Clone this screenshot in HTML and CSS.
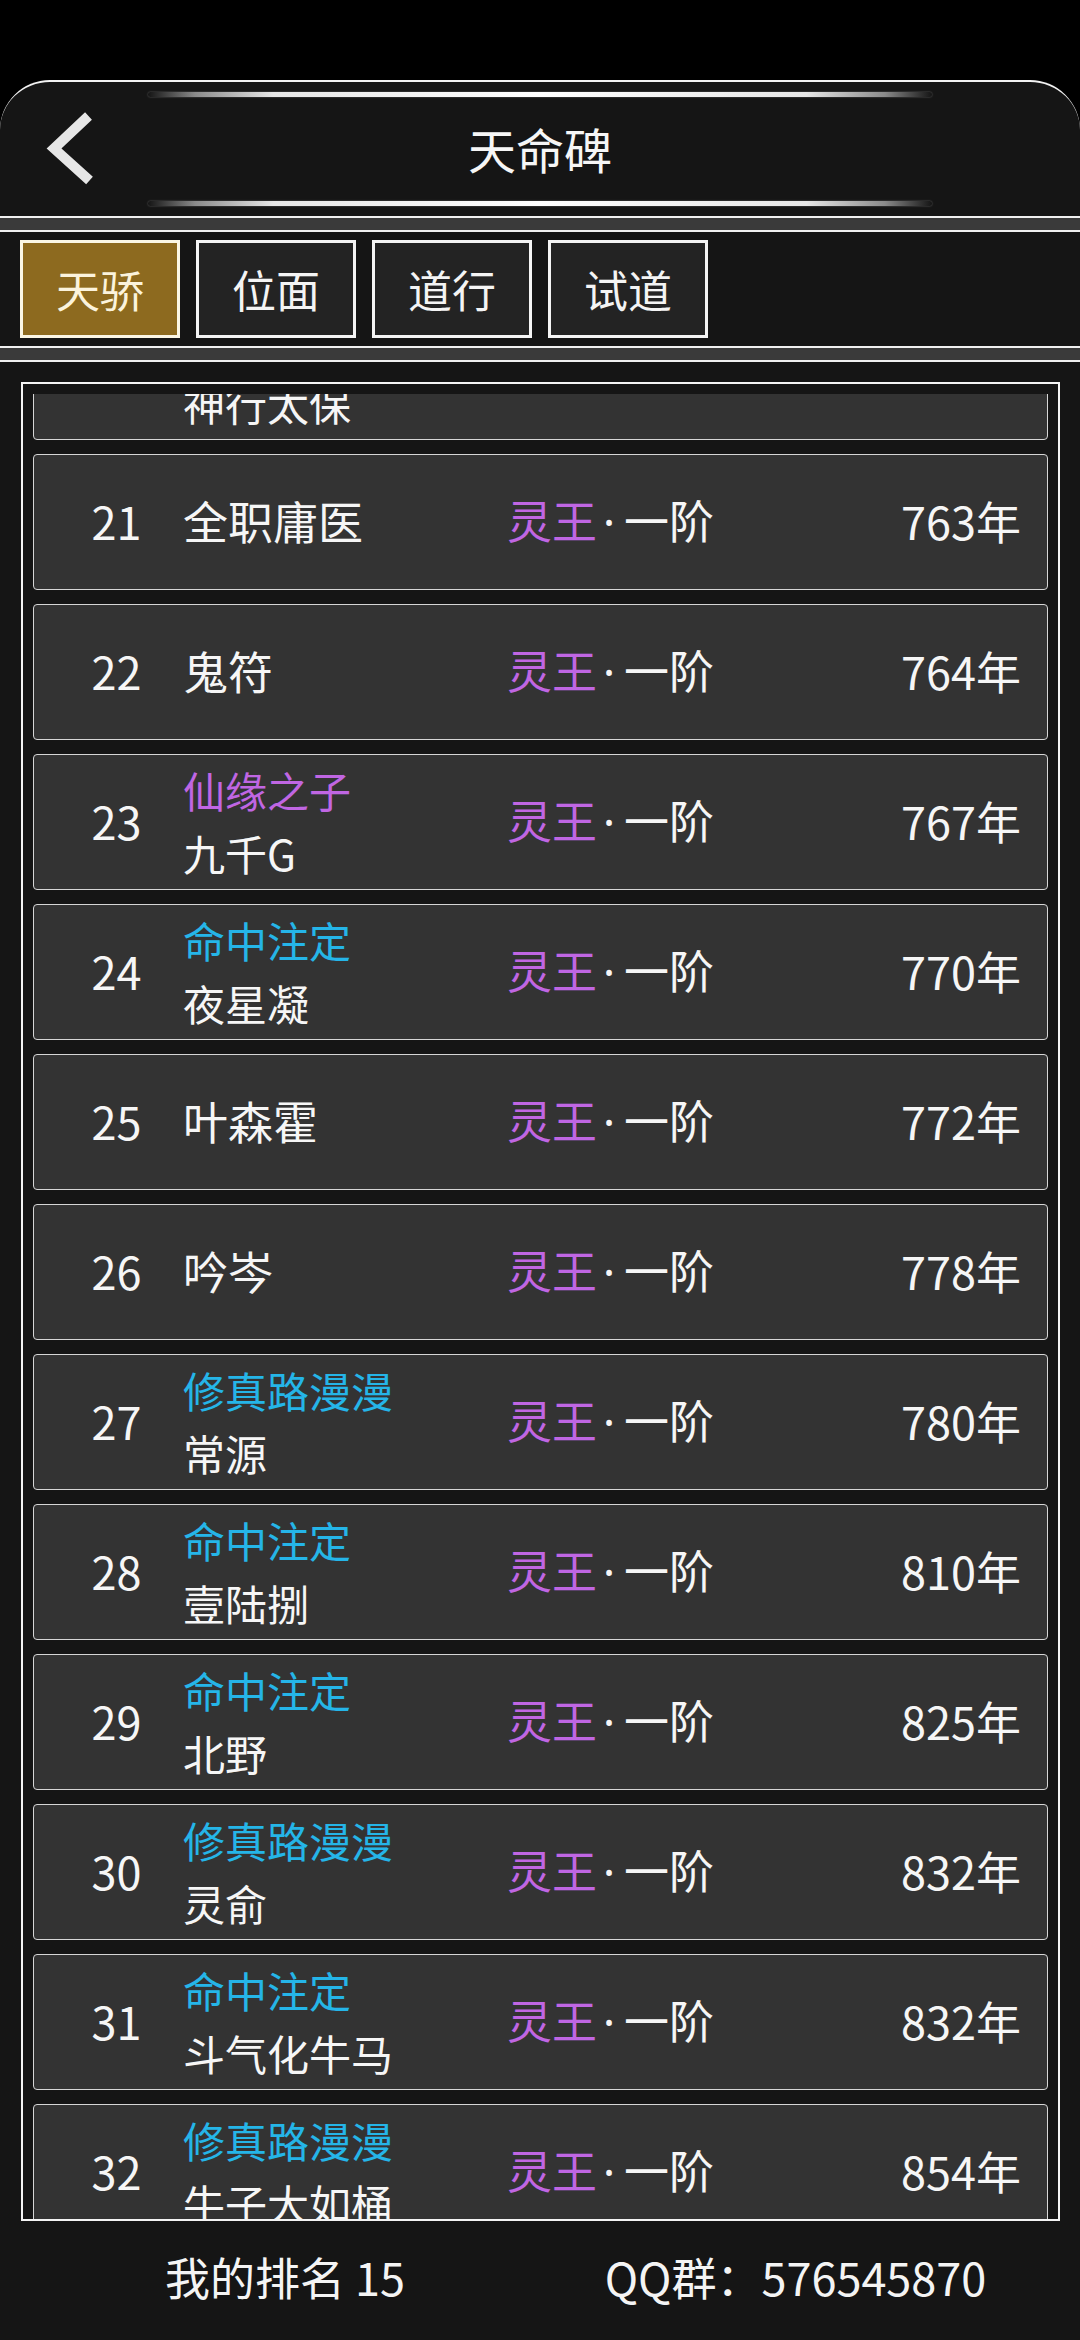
FILE: index.html
```html
<!DOCTYPE html>
<html lang="zh-CN">
<head>
<meta charset="utf-8">
<title>天命碑</title>
<link rel="stylesheet" href="styles.css">
</head>
<body>
<div class="page">
  <header class="header">
    <div class="glow-line"></div>
    <div class="title-row">
      <div class="back">
        <svg class="back-icon" width="60" height="80" viewBox="0 0 60 80">
          <polyline points="48.5,7 14,39.5 49.5,71.5" fill="none" stroke="#e6e6e6" stroke-width="10" stroke-linejoin="miter" stroke-miterlimit="4"/>
        </svg>
      </div>
      <h1 class="title">天命碑</h1>
      <div class="spacer"></div>
    </div>
    <div class="glow-line"></div>
  </header>
  <div class="sep"></div>
  <nav class="tabs">
    <div class="tab active">天骄</div>
    <div class="tab">位面</div>
    <div class="tab">道行</div>
    <div class="tab">试道</div>
  </nav>
  <div class="sep"></div>
  <main class="content">
    <section class="frame">
      <div class="viewport">
        <ul class="list">
          <li class="row"><span class="rank">20</span><span class="name two"><span class="badge cyan">命中注定</span><span>神行太保</span></span><span class="realm"><span class="purple">灵王</span><span class="dot">·</span>一阶</span><span class="years">762年</span></li>
          <li class="row"><span class="rank">21</span><span class="name"><span>全职庸医</span></span><span class="realm"><span class="purple">灵王</span><span class="dot">·</span>一阶</span><span class="years">763年</span></li>
          <li class="row"><span class="rank">22</span><span class="name"><span>鬼符</span></span><span class="realm"><span class="purple">灵王</span><span class="dot">·</span>一阶</span><span class="years">764年</span></li>
          <li class="row"><span class="rank">23</span><span class="name two"><span class="badge purple">仙缘之子</span><span>九千G</span></span><span class="realm"><span class="purple">灵王</span><span class="dot">·</span>一阶</span><span class="years">767年</span></li>
          <li class="row"><span class="rank">24</span><span class="name two"><span class="badge cyan">命中注定</span><span>夜星凝</span></span><span class="realm"><span class="purple">灵王</span><span class="dot">·</span>一阶</span><span class="years">770年</span></li>
          <li class="row"><span class="rank">25</span><span class="name"><span>叶森霍</span></span><span class="realm"><span class="purple">灵王</span><span class="dot">·</span>一阶</span><span class="years">772年</span></li>
          <li class="row"><span class="rank">26</span><span class="name"><span>吟岑</span></span><span class="realm"><span class="purple">灵王</span><span class="dot">·</span>一阶</span><span class="years">778年</span></li>
          <li class="row"><span class="rank">27</span><span class="name two"><span class="badge cyan">修真路漫漫</span><span>常源</span></span><span class="realm"><span class="purple">灵王</span><span class="dot">·</span>一阶</span><span class="years">780年</span></li>
          <li class="row"><span class="rank">28</span><span class="name two"><span class="badge cyan">命中注定</span><span>壹陆捌</span></span><span class="realm"><span class="purple">灵王</span><span class="dot">·</span>一阶</span><span class="years">810年</span></li>
          <li class="row"><span class="rank">29</span><span class="name two"><span class="badge cyan">命中注定</span><span>北野</span></span><span class="realm"><span class="purple">灵王</span><span class="dot">·</span>一阶</span><span class="years">825年</span></li>
          <li class="row"><span class="rank">30</span><span class="name two"><span class="badge cyan">修真路漫漫</span><span>灵俞</span></span><span class="realm"><span class="purple">灵王</span><span class="dot">·</span>一阶</span><span class="years">832年</span></li>
          <li class="row"><span class="rank">31</span><span class="name two"><span class="badge cyan">命中注定</span><span>斗气化牛马</span></span><span class="realm"><span class="purple">灵王</span><span class="dot">·</span>一阶</span><span class="years">832年</span></li>
          <li class="row"><span class="rank">32</span><span class="name two"><span class="badge cyan">修真路漫漫</span><span>牛子大如桶</span></span><span class="realm"><span class="purple">灵王</span><span class="dot">·</span>一阶</span><span class="years">854年</span></li>
        </ul>
      </div>
    </section>
    <footer class="footer">
      <div class="my-rank">我的排名 15</div>
      <div class="qq">QQ群：576545870</div>
    </footer>
  </main>
</div>
</body>
</html>
```

FILE: styles.css
```css
* {
  box-sizing: border-box;
  margin: 0;
  padding: 0;
}

html, body {
  width: 1080px;
  height: 2340px;
  background: #000;
  overflow: hidden;
}

body {
  font-family: "Noto Sans CJK SC", "Noto Sans", sans-serif;
  color: #f4f4f4;
}

.page {
  width: 1080px;
  height: 2340px;
  padding-top: 80px;
  display: flex;
  flex-direction: column;
}

.header {
  height: 138px;
  background: #151515;
  border-top: 2px solid #f2f2f2;
  border-bottom: 2px solid #f0f0f0;
  border-radius: 50px 50px 0 0;
  padding: 10px 0;
  display: flex;
  flex-direction: column;
}

.glow-line {
  height: 5px;
  margin: 0 148px;
  background: linear-gradient(90deg, rgba(120,120,120,0) 0%, #8a8a8a 6%, #e6e6e6 16%, #ffffff 50%, #e6e6e6 84%, #8a8a8a 94%, rgba(120,120,120,0) 100%);
  border-radius: 3px;
  box-shadow: 0 0 2px rgba(255,255,255,0.35);
}

.title-row {
  height: 104px;
  display: grid;
  grid-template-columns: 1fr auto 1fr;
  align-items: center;
}

.back {
  padding-left: 40px;
  display: flex;
  align-items: center;
}

.back-icon {
  display: block;
}

.title {
  font-size: 48px;
  font-weight: 400;
  color: #f6f6f6;
  line-height: 1;
  margin-top: -3px;
}

.sep {
  height: 14px;
  background: #3a3a3a;
  border-bottom: 2px solid #f0f0f0;
}

.tabs {
  height: 116px;
  background: #151515;
  border-bottom: 2px solid #f0f0f0;
  padding: 8px 20px;
  display: flex;
  gap: 16px;
}

.tab {
  width: 160px;
  height: 98px;
  border: 3px solid #f4f4f4;
  background: #232323;
  color: #f4f4f4;
  font-size: 44px;
  display: flex;
  align-items: center;
  justify-content: center;
  line-height: 1;
}

.tab.active {
  background: #8d6a1f;
  border-color: #fbf6e4;
  color: #fbf3dc;
}

.content {
  flex: 1;
  background: #151515;
  padding: 20px 20px 0 21px;
  display: flex;
  flex-direction: column;
}

.frame {
  height: 1839px;
  border: 2px solid #f4f4f4;
  padding: 10px 10px 0;
}

.viewport {
  height: 100%;
  overflow: hidden;
}

.list {
  list-style: none;
  margin-top: -90px;
  display: flex;
  flex-direction: column;
  gap: 14px;
}

.row {
  height: 136px;
  flex: none;
  background: #333333;
  border: 1px solid #d6d6d6;
  border-radius: 4px;
  display: flex;
  align-items: center;
  padding: 0 26px 3px 16px;
  font-size: 45px;
  color: #f6f6f6;
}

.rank {
  width: 133px;
  text-align: center;
  line-height: 1;
}

.name {
  width: 324px;
  display: flex;
  flex-direction: column;
  line-height: 64px;
  white-space: nowrap;
  font-size: 45px;
}

.name.two {
  font-size: 42px;
  line-height: 63px;
}

.realm {
  flex: 1;
  white-space: nowrap;
  line-height: 1;
}

.dot {
  font-family: "Noto Sans", "DejaVu Sans", sans-serif;
  padding: 0 9px 0 6px;
}

.purple {
  color: #c066e3;
}

.cyan {
  color: #25b5e8;
}

.years {
  line-height: 1;
  white-space: nowrap;
}

.footer {
  flex: 1;
  display: grid;
  grid-template-columns: 570px 451px;
  align-items: center;
  font-size: 45px;
  color: #f4f4f4;
  margin-left: -21px;
  padding-bottom: 8px;
}

.my-rank, .qq {
  text-align: center;
  white-space: nowrap;
}
```
